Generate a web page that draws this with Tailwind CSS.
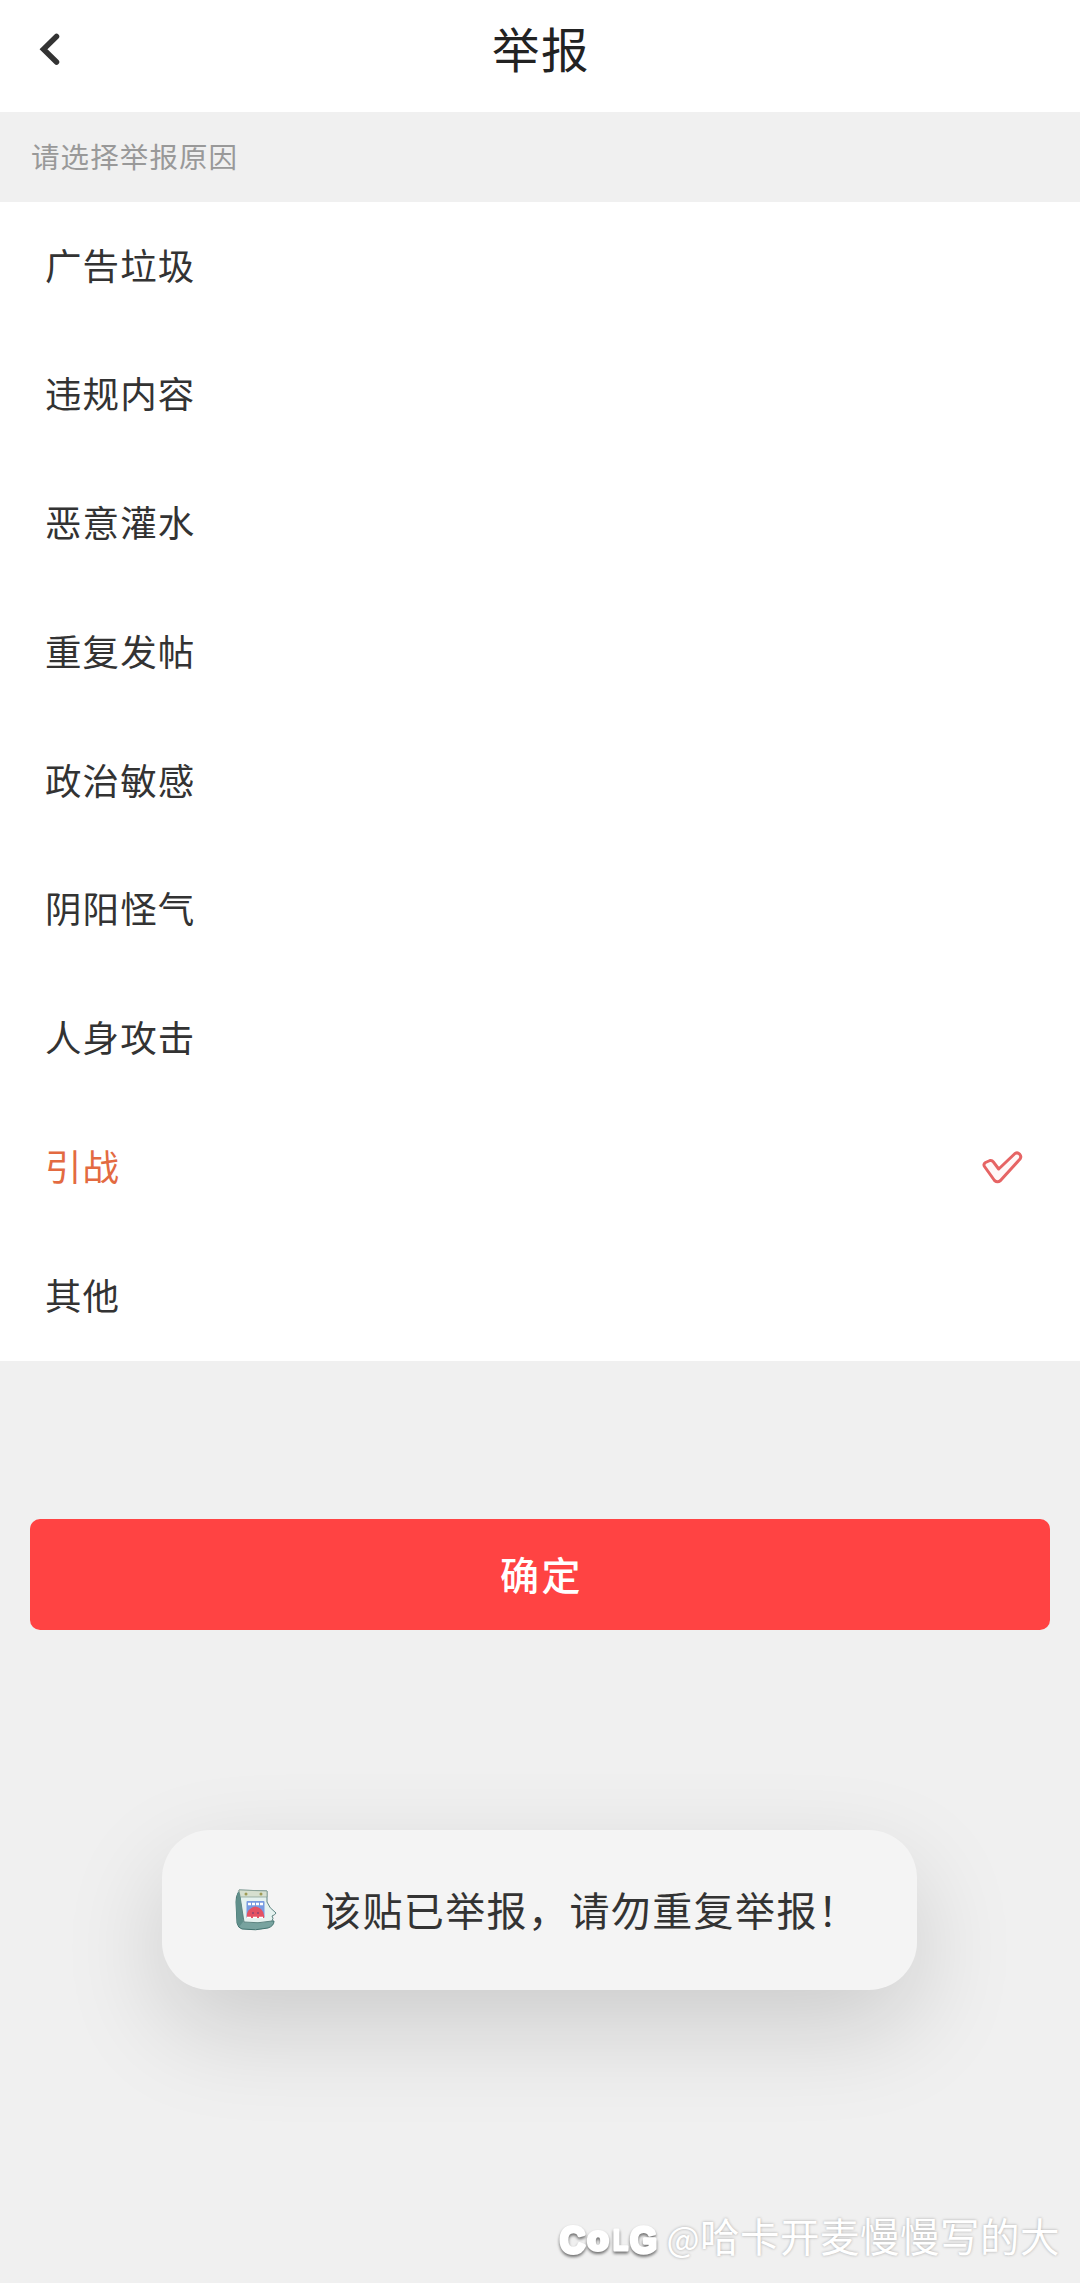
<!DOCTYPE html>
<html lang="zh-CN">
<head>
<meta charset="utf-8">
<title>举报</title>
<script src="https://cdn.jsdelivr.net/npm/@tailwindcss/browser@4"></script>
</head>
<body class="flex h-[2283px] w-[1080px] flex-col overflow-hidden bg-[#f0f0f0] font-['Noto_Sans_CJK_SC',sans-serif] text-[#333]">
  <header class="grid h-28 shrink-0 grid-cols-[1fr_auto_1fr] bg-white">
    <svg class="mt-8 ml-9 h-[34px] w-7" viewBox="0 0 28 34" fill="none" stroke="#333" stroke-width="5.5" stroke-linecap="round" stroke-linejoin="miter"><path d="M20.5 4.500 L7.500 17.3 L20.5 30"/></svg>
    <h1 class="h-[95px] pl-0.5 text-[47.5px] leading-[95px] tracking-[1.5px] text-[#222]">举报</h1>
  </header>
  <p class="h-[90px] shrink-0 pl-[31px] text-[28.5px] leading-[87px] tracking-[1.1px] text-[#999]">请选择举报原因</p>
  <ul class="grid h-[1159px] shrink-0 grid-rows-9 bg-white px-[45px] text-[36.5px] tracking-[1.1px]">
    <li class="flex items-center pb-[3px]">广告垃圾</li>
    <li class="flex items-center pb-[3px]">违规内容</li>
    <li class="flex items-center pb-[3px]">恶意灌水</li>
    <li class="flex items-center pb-[3px]">重复发帖</li>
    <li class="flex items-center pb-[3px]">政治敏感</li>
    <li class="flex items-center pb-[3px]">阴阳怪气</li>
    <li class="flex items-center pb-[3px]">人身攻击</li>
    <li class="flex items-center justify-between pb-[3px] text-[#e36a41]">引战
      <svg class="mt-[3px] mr-[11px] h-9 w-[44px]" viewBox="0 0 44 36" fill="#fff8f8" stroke="#e66464" stroke-width="3" stroke-linejoin="round"><path d="M4.5 16.5 Q3 14 5.5 12.5 L10 10.5 Q12 10 13.3 11.8 L18.7 19 L35 3.5 Q37.5 2 39.5 4 Q41.8 6.5 40 9 L20.5 30.5 Q17.5 33 14.5 30.5 Z"/></svg>
    </li>
    <li class="flex items-center pb-[3px]">其他</li>
  </ul>
  <button class="mx-[30px] mt-[158px] h-[111px] shrink-0 rounded-[10px] bg-[#ff4343] pb-[3px] pl-[3px] text-[39px] font-medium tracking-[2.5px] text-white">确定</button>
  <div class="mt-[200px] ml-[162px] flex h-[160px] w-[755px] shrink-0 items-center rounded-[48px] bg-[#f4f4f4] pl-[72px] shadow-[0_38px_100px_rgba(0,0,0,0.15)]">
    <svg class="h-[44px] w-[44px]" viewBox="0 0 44 44">
      <path d="M4 5 Q2 8 2 14 L3 35 Q4 40 8 41 Q22 43 34 40 Q40 38 40 33 L9 31 L6 3Z" fill="#78a39f" stroke="#42736f" stroke-width="1"/>
      <path d="M5 2 L33 3 L33 14 Q35 20 42 25 Q41 27 38 28 Q40 30 38 33 Q24 36 10 34 Z" fill="#e5f2ef" stroke="#5d8481" stroke-width="1"/>
      <path d="M5 2 L33 3 V9 H6 Z" fill="#d6dfcf" stroke="#829b91" stroke-width=".7"/>
      <path d="M4 3 L6 6 L9 34 L5 39 Q2 32 2 14 Z" fill="#608f8b"/>
      <circle cx="12" cy="6" r="1.5" fill="#9f9b55"/><circle cx="27" cy="6" r="1.5" fill="#9f9b55"/>
      <rect x="12.500" y="13" width="18" height="17" rx="1" fill="#779be1"/>
      <path d="M13 30 Q12 24 16 21 Q21 16 27 21 Q31 25 30 30Z" fill="#e45263"/>
      <path d="M14 16 H29" stroke="#fff" stroke-width="2.500" stroke-dasharray="3 1"/>
      <path d="M18 25 H20 M23 25 H25" stroke="#8e4470" stroke-width="1.5"/>
      <path d="M13 29.500 H30" stroke="#fff" stroke-width="1.5" stroke-dasharray="4 2"/>
    </svg>
    <span class="ml-[43px] pb-[3px] text-[40px] tracking-[1.4px] whitespace-nowrap">该贴已举报，请勿重复举报！</span>
  </div>
  <footer class="mt-auto mr-5 mb-[18px] flex h-[60px] shrink-0 items-center justify-end text-white">
    <svg class="h-[60px] w-[112px] [filter:drop-shadow(0_2px_1.500px_rgba(0,0,0,0.55))]" viewBox="0 0 112 60" fill="#fff" stroke="#fff" stroke-width="4" stroke-linejoin="round" font-family="Liberation Sans" font-weight="bold">
      <text x="6" y="48" font-size="37" textLength="25" lengthAdjust="spacingAndGlyphs">C</text>
      <text x="33.500" y="45" font-size="34" textLength="21" lengthAdjust="spacingAndGlyphs">o</text>
      <text x="59" y="45" font-size="30" textLength="15" lengthAdjust="spacingAndGlyphs" stroke-width="3">L</text>
      <text x="76" y="48" font-size="37" textLength="27" lengthAdjust="spacingAndGlyphs" stroke-width="3.500">G</text>
    </svg>
    <span class="text-[39.5px] tracking-[0.5px] whitespace-nowrap [text-shadow:0_0_3px_rgba(0,0,0,0.3)]"><span class="text-[35px]">@</span>哈卡开麦慢慢写的大</span>
  </footer>
</body>
</html>
